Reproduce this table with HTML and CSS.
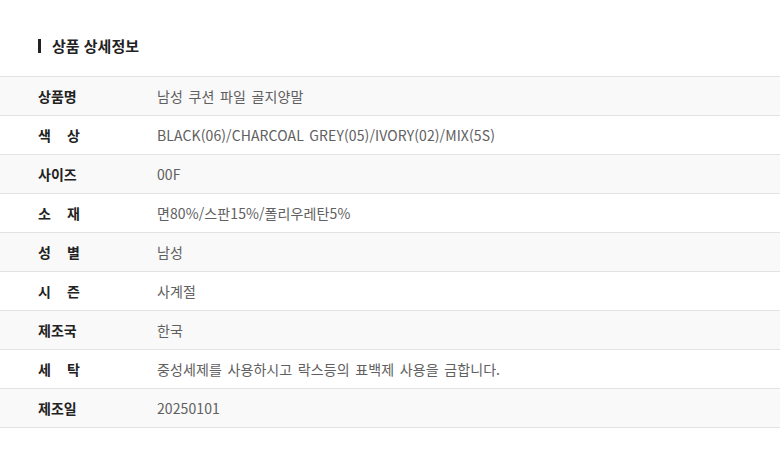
FILE: index.html
```html
<!DOCTYPE html>
<html lang="ko">
<head>
<meta charset="utf-8">
<link rel="stylesheet" href="styles.css">
</head>
<body>
<div class="page">
  <h2 class="title">상품 상세정보</h2>
  <table class="info">
    <tr class="odd"><th><span class="lbl">상품명</span></th><td>남성 쿠션 파일 골지양말</td></tr>
    <tr><th><span class="lbl"><span>색</span><span>상</span></span></th><td>BLACK(06)/CHARCOAL GREY(05)/IVORY(02)/MIX(5S)</td></tr>
    <tr class="odd"><th><span class="lbl">사이즈</span></th><td>00F</td></tr>
    <tr><th><span class="lbl"><span>소</span><span>재</span></span></th><td>면80%/스판15%/폴리우레탄5%</td></tr>
    <tr class="odd"><th><span class="lbl"><span>성</span><span>별</span></span></th><td>남성</td></tr>
    <tr><th><span class="lbl"><span>시</span><span>즌</span></span></th><td>사계절</td></tr>
    <tr class="odd"><th><span class="lbl">제조국</span></th><td>한국</td></tr>
    <tr><th><span class="lbl"><span>세</span><span>탁</span></span></th><td>중성세제를 사용하시고 락스등의 표백제 사용을 금합니다.</td></tr>
    <tr class="odd"><th><span class="lbl">제조일</span></th><td>20250101</td></tr>
  </table>
</div>
</body>
</html>
```

FILE: styles.css
```css
html, body {
  margin: 0;
  padding: 0;
  background: #fff;
}
body {
  font-family: "Noto Sans CJK KR", "Noto Sans", sans-serif;
  color: #222;
}
.page {
  padding-top: 39px;
}
.title {
  display: flex;
  align-items: center;
  height: 14px;
  margin: 0 0 23px 38px;
  padding-left: 11px;
  border-left: 3px solid #222;
  font-size: 15px;
  font-weight: 700;
  line-height: 14px;
}
.info {
  width: 100%;
  border-collapse: collapse;
  border-top: 1px solid #e3e3e3;
}
.info tr {
  height: 39px;
  border-bottom: 1px solid #e3e3e3;
}
.info tr.odd {
  background: #f9f9f9;
}
.info th {
  width: 119px;
  padding: 0 0 0 38px;
  text-align: left;
  font-size: 14px;
  font-weight: 700;
  color: #222;
  box-sizing: content-box;
}
.lbl {
  display: inline-flex;
  justify-content: space-between;
  width: 42px;
}
.info td {
  padding: 0;
  font-size: 14px;
  color: #606060;
  letter-spacing: 0.1px;
  word-spacing: 1.5px;
}
```
